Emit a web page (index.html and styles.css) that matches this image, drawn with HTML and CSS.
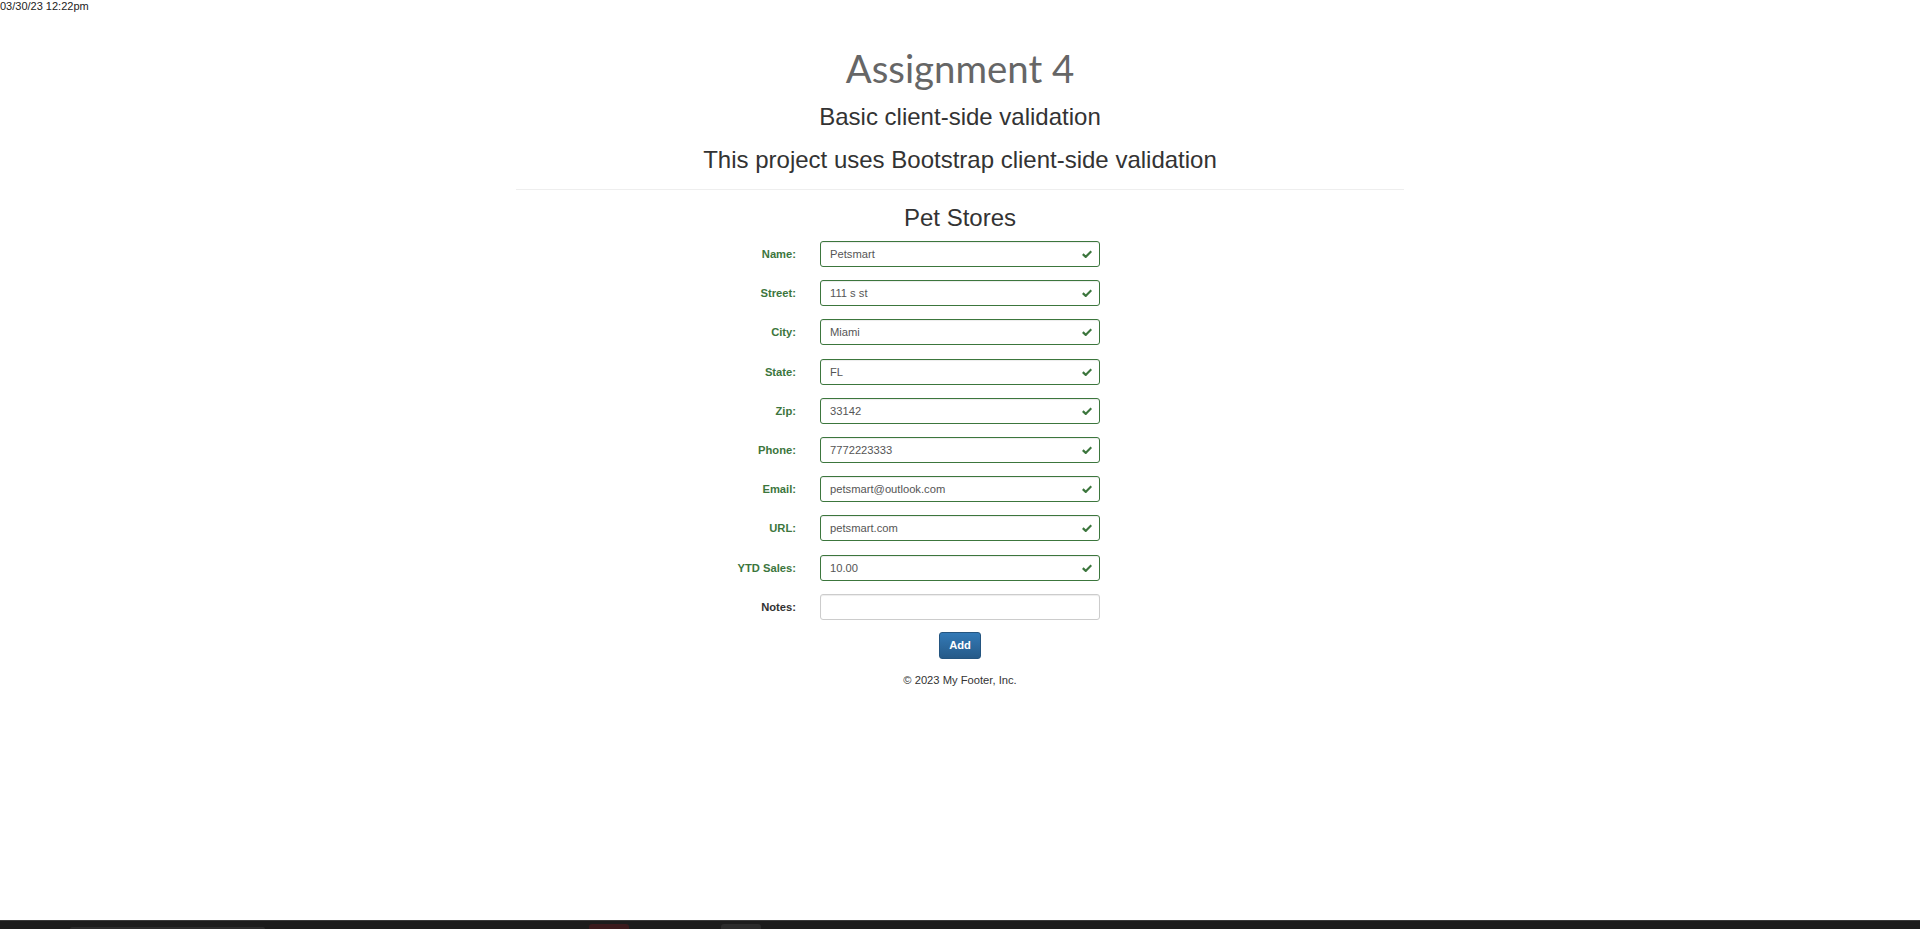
FILE: index.html
```html
<!DOCTYPE html>
<html lang="en">
<head>
<meta charset="utf-8">
<title>Assignment 4</title>
<link rel="stylesheet" href="styles.css">
</head>
<body>
<div class="stamp">03/30/23 12:22pm</div>
<main class="container">
  <h1 class="title">Assignment 4</h1>
  <h2 class="sub sub-first">Basic client-side validation</h2>
  <h2 class="sub">This project uses Bootstrap client-side validation</h2>
  <hr class="rule">
  <h3 class="form-title">Pet Stores</h3>
  <form class="form">
    <label class="lbl ok">Name:</label>
    <div class="field ok"><input class="inp" value="Petsmart"><svg class="check" viewBox="0 0 10 8"><path d="M0.8 4.1 L3.7 6.9 L9.3 1.2"/></svg></div>
    <label class="lbl ok">Street:</label>
    <div class="field ok"><input class="inp" value="111 s st"><svg class="check" viewBox="0 0 10 8"><path d="M0.8 4.1 L3.7 6.9 L9.3 1.2"/></svg></div>
    <label class="lbl ok">City:</label>
    <div class="field ok"><input class="inp" value="Miami"><svg class="check" viewBox="0 0 10 8"><path d="M0.8 4.1 L3.7 6.9 L9.3 1.2"/></svg></div>
    <label class="lbl ok">State:</label>
    <div class="field ok"><input class="inp" value="FL"><svg class="check" viewBox="0 0 10 8"><path d="M0.8 4.1 L3.7 6.9 L9.3 1.2"/></svg></div>
    <label class="lbl ok">Zip:</label>
    <div class="field ok"><input class="inp" value="33142"><svg class="check" viewBox="0 0 10 8"><path d="M0.8 4.1 L3.7 6.9 L9.3 1.2"/></svg></div>
    <label class="lbl ok">Phone:</label>
    <div class="field ok"><input class="inp" value="7772223333"><svg class="check" viewBox="0 0 10 8"><path d="M0.8 4.1 L3.7 6.9 L9.3 1.2"/></svg></div>
    <label class="lbl ok">Email:</label>
    <div class="field ok"><input class="inp" value="petsmart@outlook.com"><svg class="check" viewBox="0 0 10 8"><path d="M0.8 4.1 L3.7 6.9 L9.3 1.2"/></svg></div>
    <label class="lbl ok">URL:</label>
    <div class="field ok"><input class="inp" value="petsmart.com"><svg class="check" viewBox="0 0 10 8"><path d="M0.8 4.1 L3.7 6.9 L9.3 1.2"/></svg></div>
    <label class="lbl ok">YTD Sales:</label>
    <div class="field ok"><input class="inp" value="10.00"><svg class="check" viewBox="0 0 10 8"><path d="M0.8 4.1 L3.7 6.9 L9.3 1.2"/></svg></div>
    <label class="lbl">Notes:</label>
    <div class="field"><input class="inp"></div>
    <div class="actions"><button type="button" class="btn">Add</button></div>
  </form>
  <footer class="footer">&copy; 2023 My Footer, Inc.</footer>
</main>
<div class="taskbar">
  <span class="tb-item tb-search"></span>
  <span class="tb-item tb-red"></span>
  <span class="tb-item tb-gray"></span>
</div>
</body>
</html>
```
FILE: styles.css
```css
html, body {
  margin: 0;
  padding: 0;
}
body {
  min-height: 100vh;
  display: flex;
  flex-direction: column;
  font-family: "Liberation Sans", Arial, sans-serif;
  color: #333;
  background: #fff;
}
.stamp {
  font-size: 11px;
  line-height: 13px;
  color: #222;
}
.container {
  width: 888px;
  margin: 0 auto;
  text-align: center;
}
.title {
  margin: 34px 0 0;
  font-family: Lato, "Open Sans", sans-serif;
  font-weight: normal;
  font-size: 38.4px;
  line-height: 42px;
  color: #666;
}
.sub {
  margin: 17px 0 0;
  font-size: 24px;
  font-weight: normal;
  line-height: 26px;
  color: #333;
}
.sub-first {
  margin-top: 15px;
}
.rule {
  margin: 16px 0 0;
  border: 0;
  border-top: 1px solid #eee;
  height: 0;
}
.form-title {
  margin: 15px 0 0;
  font-size: 24px;
  font-weight: normal;
  line-height: 26px;
  color: #333;
}
.form {
  margin-top: 10px;
  display: grid;
  grid-template-columns: 1fr 280px 1fr;
  row-gap: 13.2px;
  align-items: center;
}
.lbl {
  grid-column: 1;
  justify-self: end;
  margin-right: 24px;
  font-size: 11.2px;
  font-weight: bold;
  color: #333;
}
.lbl.ok {
  color: #3c763d;
}
.field {
  grid-column: 2;
  position: relative;
  height: 26px;
}
.inp {
  box-sizing: border-box;
  width: 100%;
  height: 26px;
  margin: 0;
  padding: 0 9px;
  border: 1px solid #ccc;
  border-radius: 3px;
  box-shadow: inset 0 1px 1px rgba(0, 0, 0, .075);
  font-family: "Liberation Sans", Arial, sans-serif;
  font-size: 11.2px;
  color: #555;
  background: #fff;
  outline: none;
}
.field.ok .inp {
  border-color: #3c763d;
}
.check {
  position: absolute;
  right: 8px;
  top: 9px;
  width: 10px;
  height: 8px;
  fill: none;
  stroke: #3c763d;
  stroke-width: 2.2;
}
.actions {
  grid-column: 1 / -1;
  margin-top: -1px;
  display: flex;
  justify-content: center;
}
.btn {
  box-sizing: border-box;
  width: 42px;
  height: 27px;
  padding: 0;
  border: 1px solid #245580;
  border-radius: 3px;
  background: linear-gradient(#337ab7, #265a88);
  color: #fff;
  font-family: "Liberation Sans", Arial, sans-serif;
  font-size: 11.2px;
  font-weight: bold;
}
.footer {
  margin-top: 15px;
  font-size: 11.2px;
  line-height: 13px;
  color: #333;
}
.taskbar {
  margin-top: auto;
  height: 8px;
  border-top: 1px solid #3a3a3a;
  background: #1c1c1c;
  display: flex;
  align-items: flex-end;
}
.tb-item {
  display: block;
  height: 5px;
  border-radius: 3px 3px 0 0;
}
.tb-search {
  margin-left: 70px;
  width: 195px;
  height: 2px;
  background: #2c2c2c;
}
.tb-red {
  margin-left: 324px;
  width: 40px;
  background: #3a1a1c;
}
.tb-gray {
  margin-left: 92px;
  width: 40px;
  background: #2b2b2b;
}
```
